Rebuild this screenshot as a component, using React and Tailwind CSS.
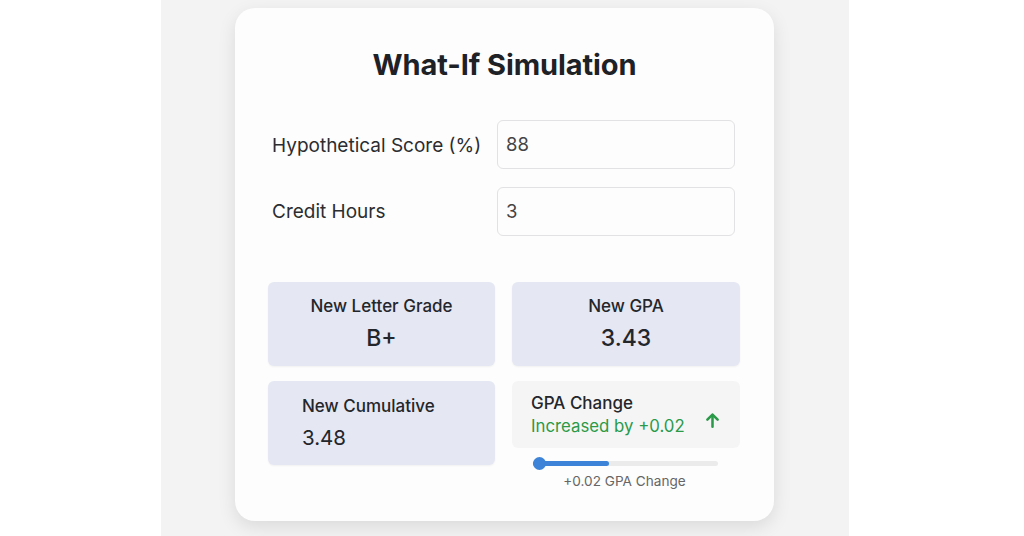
import React from "react";

function ArrowUp() {
  return (
    <svg width="19" height="19" viewBox="0 0 24 24" fill="none" stroke="#2a9a48" strokeWidth="3.2" strokeLinecap="round" strokeLinejoin="round">
      <path d="M12 20V5" />
      <path d="M5.5 11l6.5-6.5 6.5 6.5" />
    </svg>
  );
}

export default function App() {
  return (
    <div className="w-[1024px] h-[536px] bg-white overflow-hidden" style={{ fontFamily: "Inter, 'Liberation Sans', sans-serif" }}>
      <div className="ml-[161px] w-[688px] h-[536px] bg-[#f3f3f4] pt-[8px]">
        <div className="ml-[74px] w-[539px] h-[513px] bg-[#fdfdfd] rounded-[20px] shadow-[0_6px_18px_rgba(0,0,0,0.10)] flex flex-col px-[33px] pt-[40px]">
          <h1 className="text-center text-[29px] leading-[34px] font-bold text-[#1e2226] tracking-[-0.1px]">What-If Simulation</h1>

          <div className="mt-[38px] flex flex-col gap-[18px] pl-[4px]">
            <div className="flex items-center">
              <label className="w-[225px] mt-[4px] text-[19px] text-[#2b2d30]">Hypothetical Score (%)</label>
              <div className="w-[238px] h-[49px] border border-[#e2e2e4] rounded-[6px] bg-[#fdfdfd] flex items-center px-[8px] text-[18.5px] text-[#444]">88</div>
            </div>
            <div className="flex items-center">
              <label className="w-[225px] mt-[2px] text-[19px] text-[#2b2d30]">Credit Hours</label>
              <div className="w-[238px] h-[49px] border border-[#e2e2e4] rounded-[6px] bg-[#fdfdfd] flex items-center px-[8px] text-[18.5px] text-[#444]">3</div>
            </div>
          </div>

          <div className="mt-[46px] grid grid-cols-[227px_228px] gap-x-[17px] gap-y-[15px]">
            <div className="h-[84px] bg-[#e5e7f3] rounded-[6px] shadow-[0_1px_2px_rgba(0,0,0,0.05)] flex flex-col items-center pt-[13px]">
              <div className="text-[17px] leading-[23px] font-medium text-[#23262b]">New Letter Grade</div>
              <div className="mt-[6px] text-[23px] leading-[29px] font-medium text-[#23262b]">B+</div>
            </div>
            <div className="h-[84px] bg-[#e5e7f3] rounded-[6px] shadow-[0_1px_2px_rgba(0,0,0,0.05)] flex flex-col items-center pt-[13px]">
              <div className="text-[17px] leading-[23px] font-medium text-[#23262b]">New GPA</div>
              <div className="mt-[6px] text-[23px] leading-[29px] font-medium text-[#23262b]">3.43</div>
            </div>
            <div className="h-[84px] bg-[#e5e7f3] rounded-[6px] shadow-[0_1px_2px_rgba(0,0,0,0.05)] flex flex-col pl-[34px] pt-[14px]">
              <div className="text-[17px] leading-[23px] font-medium text-[#23262b]">New Cumulative</div>
              <div className="mt-[7px] text-[20.5px] leading-[26px] text-[#23262b]">3.48</div>
            </div>
            <div className="flex flex-col">
              <div className="h-[67px] bg-[#f5f5f6] rounded-[6px] flex items-center justify-between pl-[19px] pr-[18px]">
                <div className="flex flex-col">
                  <div className="text-[17px] leading-[22px] font-medium text-[#23262b]">GPA Change</div>
                  <div className="mt-[1px] text-[16.8px] leading-[22px] text-[#2a9a48]">Increased by +0.02</div>
                </div>
                <div className="mt-[12px]"><ArrowUp /></div>
              </div>
              <div className="relative mt-[13px] ml-[21px] w-[185px] h-[5px] rounded-full bg-[#ebebec]">
                <div className="h-[5px] w-[76px] rounded-full bg-[#3d84d8]" />
                <div className="absolute left-[0px] top-[-4px] w-[13px] h-[13px] rounded-full bg-[#3d84d8]" />
              </div>
              <div className="mt-[7px] ml-[20px] w-[185px] text-center text-[13.6px] leading-[17px] text-[#666]">+0.02 GPA Change</div>
            </div>
          </div>
        </div>
      </div>
    </div>
  );
}
